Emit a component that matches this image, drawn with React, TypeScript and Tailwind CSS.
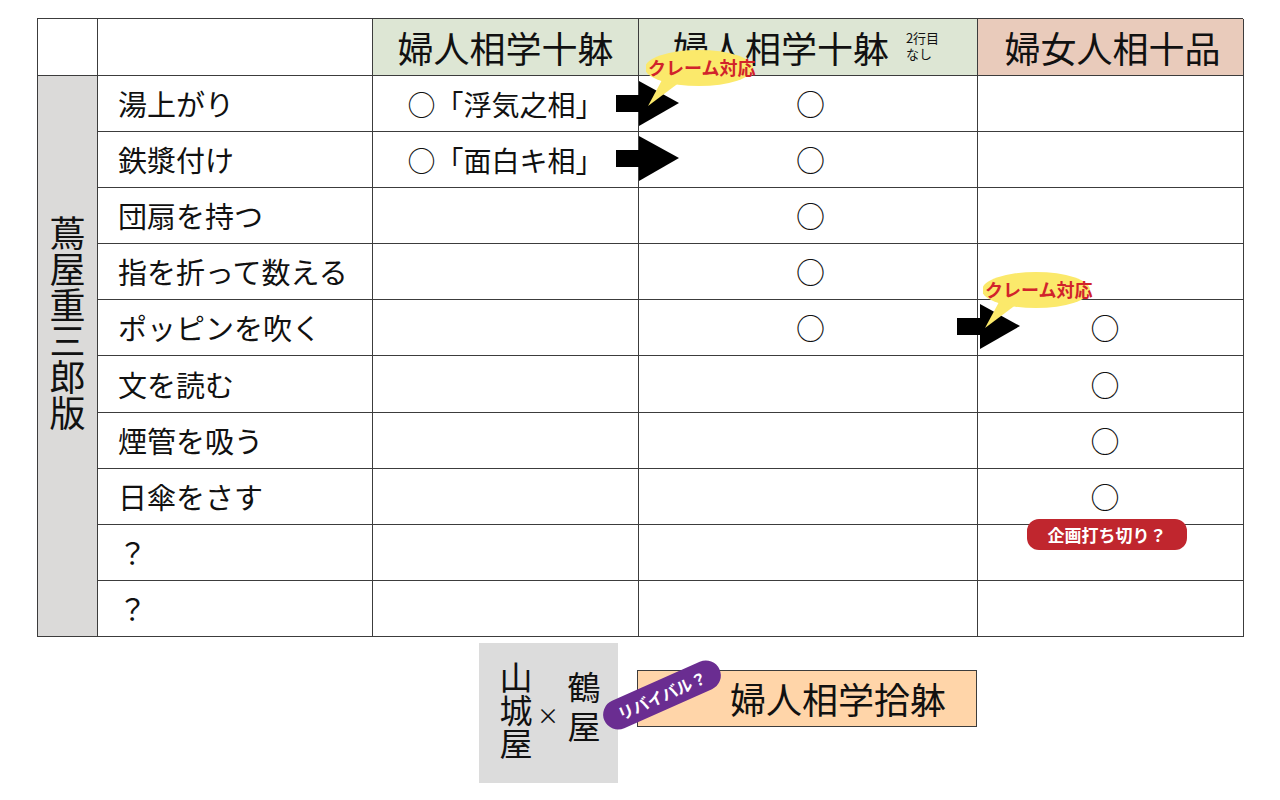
import React from "react";

// 婦人相学十躰 比較表: 行 = 図柄, 列 = シリーズ。
const ROWS = [
  { label: "湯上がり", c3: "○「浮気之相」", c4: "○", c5: "" },
  { label: "鉄漿付け", c3: "○「面白キ相」", c4: "○", c5: "" },
  { label: "団扇を持つ", c3: "", c4: "○", c5: "" },
  { label: "指を折って数える", c3: "", c4: "○", c5: "" },
  { label: "ポッピンを吹く", c3: "", c4: "○", c5: "○" },
  { label: "文を読む", c3: "", c4: "", c5: "○" },
  { label: "煙管を吸う", c3: "", c4: "", c5: "○" },
  { label: "日傘をさす", c3: "", c4: "", c5: "○" },
  { label: "？", c3: "", c4: "", c5: "" },
  { label: "？", c3: "", c4: "", c5: "" },
];

const cell = "border-r border-b border-[#3c3c3c] flex items-center";

// Black block arrow, drawn over the table
function Arrow({ x, y }: { x: number; y: number }) {
  return (
    <svg
      className="absolute pointer-events-none"
      style={{ left: x, top: y }}
      width="64"
      height="46"
      viewBox="0 0 64 46"
    >
      <rect x="0" y="14" width="25" height="17" fill="#000" />
      <polygon points="23,0 63,22 23,45" fill="#000" />
    </svg>
  );
}

// Yellow speech bubble with red "クレーム対応"
function Callout({ x, y }: { x: number; y: number }) {
  return (
    <div className="absolute pointer-events-none" style={{ left: x, top: y }}>
      <svg width="120" height="60" viewBox="0 0 120 60" className="block">
        <polygon points="16,30 34,32 2,56" fill="#fbe96b" />
        <ellipse cx="53" cy="18" rx="54" ry="18" fill="#fbe96b" />
      </svg>
      <span className="absolute left-[2px] top-[6px] whitespace-nowrap text-[18px] leading-[22px] font-bold text-[#d1232b]">
        クレーム対応
      </span>
    </div>
  );
}

export default function App() {
  return (
    <div className="relative w-[1280px] h-[800px] bg-white text-[#111] font-['Noto_Sans_CJK_JP','Noto_Sans',sans-serif] pt-[18px] pl-[37px]">
      {/* Main table */}
      <div className="grid grid-cols-[60px_275px_266px_339px_266px] grid-rows-[57px_repeat(10,56.1px)] w-[1206px] border-l border-t border-[#3c3c3c]">
        {/* header row */}
        <div className={cell} />
        <div className={cell} />
        <div className={`${cell} justify-center bg-[#dde6d4] text-[36px] leading-none`}>婦人相学十躰</div>
        <div className={`${cell} justify-center gap-[17px] bg-[#dde6d4] pr-[4px]`}>
          <span className="text-[36px] leading-none">婦人相学十躰</span>
          <span className="flex flex-col text-[13px] leading-[16px] -mt-[2px]">
            <span>2行目</span>
            <span>なし</span>
          </span>
        </div>
        <div className={`${cell} justify-center bg-[#e9cbbb] text-[36px] leading-none pl-[4px]`}>婦女人相十品</div>

        {/* left vertical label */}
        <div className="row-span-10 border-r border-b border-[#3c3c3c] bg-[#dbdad9] flex justify-center pt-[139px]">
          <span className="[writing-mode:vertical-rl] text-[36px] leading-none">蔦屋重三郎版</span>
        </div>

        {ROWS.map((r, i) => (
          <React.Fragment key={i}>
            <div className={`${cell} pl-[20px] text-[29px] leading-none`}>{r.label}</div>
            <div className={`${cell} justify-center text-[28px] leading-none`}>{r.c3}</div>
            <div className={`${cell} justify-center text-[29px] leading-none pl-[5px]`}>{r.c4}</div>
            <div className={`${cell} justify-center text-[29px] leading-none pr-[11px]`}>{r.c5}</div>
          </React.Fragment>
        ))}
      </div>

      {/* Bottom: 山城屋×鶴屋 → 婦人相学拾躰 */}
      <div className="flex items-start mt-[6px] ml-[442px] gap-[19px]">
        <div className="w-[139px] h-[140px] bg-[#dcdcdc] flex items-center pl-[20px] gap-[5px]">
          <span className="[writing-mode:vertical-rl] text-[33px] leading-none -mt-[4px]">山城屋</span>
          <span className="text-[22px] leading-none mt-[2px]">×</span>
          <span className="[writing-mode:vertical-rl] text-[33px] leading-none tracking-[6px] -mt-[6px] ml-[3px]">鶴屋</span>
        </div>
        <div className="mt-[27px] w-[340px] h-[57px] bg-[#ffd5a9] border border-[#3c3c3c] flex items-center pl-[92px] text-[36px] leading-none">
          婦人相学拾躰
        </div>
      </div>

      {/* Overlays */}
      <Arrow x={616} y={81} />
      <Arrow x={616} y={136} />
      <Arrow x={957} y={304} />
      <Callout x={646} y={50} />
      <Callout x={983} y={272} />

      <div className="absolute left-[1027px] top-[519px] w-[160px] h-[31px] rounded-[12px] bg-[#c0262e] text-white font-bold text-[17px] flex items-center justify-center">
        企画打ち切り？
      </div>

      <div className="absolute left-[599px] top-[680px] w-[126px] h-[30px] rounded-full bg-[#6a2d91] text-white font-bold text-[16px] flex items-center justify-center rotate-[-24deg]">
        リバイバル？
      </div>
    </div>
  );
}
